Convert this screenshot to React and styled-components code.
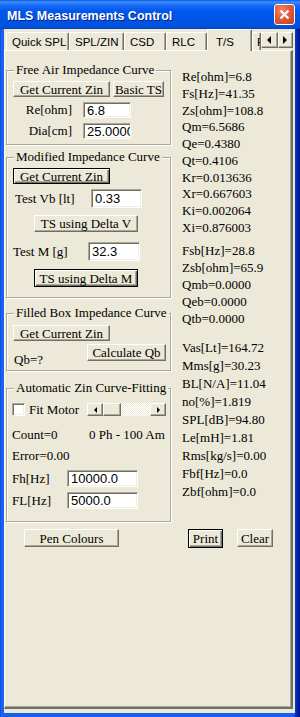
import React from "react";
import styled, { createGlobalStyle, css } from "styled-components";

const GlobalStyle = createGlobalStyle`
  html, body { margin: 0; padding: 0; background: #fff; }
  body { width: 300px; height: 717px; overflow: hidden; }
  * { box-sizing: border-box; }
`;

const Window = styled.div`
  width: 300px;
  height: 717px;
  display: flex;
  flex-direction: column;
`;

const TitleBar = styled.div`
  height: 29px;
  display: flex;
  align-items: center;
  padding: 2px 5px 0 7px;
  background: linear-gradient(
    to bottom,
    #0a5ae6 0px,
    #3d8ffc 2px,
    #1a6cf6 5px,
    #0058ee 11px,
    #0055e5 20px,
    #0052dd 26px,
    #0046c8 29px
  );
`;

const Title = styled.span`
  flex: 1;
  color: #fff;
  font: bold 12.5px "Liberation Sans", Arial, sans-serif;
  text-shadow: 1px 1px 0 #0a1e8c;
  white-space: nowrap;
`;

const CloseBtn = styled.div`
  width: 21px;
  height: 21px;
  margin-top: -2px;
  border: 1px solid #fff;
  border-radius: 3px;
  background: radial-gradient(circle at 35% 30%, #f08a6a 0%, #e2593a 45%, #c4401f 100%);
  display: flex;
  align-items: center;
  justify-content: center;
`;

const Frame = styled.div`
  flex: 1;
  display: flex;
  padding: 0 5px 4px 4px;
  background: linear-gradient(
    to right,
    #0a3ad6 0px,
    #1c64f2 1px,
    #1660ee 4px,
    #1660ee 294px,
    #0a3fd8 295px,
    #0024b0 297px,
    #001487 300px
  );
`;

const Client = styled.div`
  flex: 1;
  display: flex;
  flex-direction: column;
  background: #ece9d8;
`;

const TabStrip = styled.div`
  height: 21px;
  display: flex;
  align-items: flex-end;
  padding-left: 2px;
`;

const Tab = styled.div`
  width: ${(p) => p.$w}px;
  height: ${(p) => (p.$active ? 22 : 18)}px;
  margin-bottom: ${(p) => (p.$active ? -1 : 0)}px;
  padding-left: ${(p) => p.$pl || 5}px;
  padding-top: ${(p) => (p.$active ? 2 : 1)}px;
  display: flex;
  align-items: center;
  overflow: hidden;
  position: relative;
  z-index: ${(p) => (p.$active ? 2 : 0)};
  background: #ece9d8;
  border-top: 1px solid #fff;
  border-left: 1px solid #fff;
  border-right: 1px solid #716f64;
  box-shadow: inset -1px 0 0 #aca899;
  border-radius: 2px 2px 0 0;
  font: 11.5px "Liberation Sans", Arial, sans-serif;
  color: #000;
  white-space: nowrap;
`;

const Spin = styled.div`
  display: flex;
  align-self: flex-start;
  margin-top: 3px;
`;

const SpinBtn = styled.div`
  width: ${(p) => p.$w}px;
  height: 16px;
  display: flex;
  align-items: center;
  justify-content: center;
  background: #ece9d8;
  border: 1px solid;
  border-color: #fff #716f64 #716f64 #fff;
  box-shadow: inset -1px -1px 0 #aca899;
`;

const Panel = styled.div`
  flex: 1;
  margin: 0 2px 4px 0;
  display: flex;
  flex-direction: column;
  border-top: 1px solid #fff;
  border-left: 1px solid #fff;
  border-right: 2px solid #716f64;
  border-bottom: 2px solid #716f64;
  box-shadow: inset -1px -1px 0 #aca899;
  font: 13px "Liberation Serif", "Times New Roman", serif;
  color: #000;
`;

const Columns = styled.div`
  display: flex;
  align-items: flex-start;
`;

const LeftCol = styled.div`
  width: 165px;
  margin-left: 1px;
  display: flex;
  flex-direction: column;
`;

const RightCol = styled.div`
  margin-left: 11px;
  padding-top: 18px;
  display: flex;
  flex-direction: column;
`;

const Group = styled.div`
  margin-top: ${(p) => p.$mt}px;
  height: ${(p) => p.$h}px;
  display: flex;
  flex-direction: column;
  border: 1px solid #aca899;
  box-shadow: inset 1px 1px 0 #fff, 1px 1px 0 #fff;
`;

const Legend = styled.div`
  margin: -8px 0 0 7px;
  padding: 0 2px;
  width: fit-content;
  line-height: 14px;
  height: 14px;
  background: #ece9d8;
  white-space: nowrap;
`;

const Row = styled.div`
  display: flex;
  align-items: ${(p) => p.$align || "center"};
  height: ${(p) => p.$h}px;
  margin-top: ${(p) => p.$mt}px;
  padding-left: ${(p) => p.$pl || 0}px;
  padding-right: ${(p) => p.$pr || 0}px;
  gap: ${(p) => p.$gap || 0}px;
`;

const Label = styled.span`
  width: ${(p) => (p.$w ? `${p.$w}px` : "auto")};
  text-align: ${(p) => (p.$right ? "right" : "left")};
  margin-top: ${(p) => p.$mt || 0}px;
  line-height: 14px;
  white-space: nowrap;
`;

const Btn = styled.button`
  width: ${(p) => p.$w}px;
  height: ${(p) => p.$h || 16}px;
  margin: 0;
  margin-left: ${(p) => (p.$push ? "auto" : "0")};
  padding: 0;
  font: 13px "Liberation Serif", "Times New Roman", serif;
  line-height: 1;
  color: #000;
  background: #ece9d8;
  border: 1px solid;
  border-color: #fff #716f64 #716f64 #fff;
  box-shadow: inset -1px -1px 0 #aca899;
  white-space: nowrap;
  ${(p) =>
    p.$default &&
    css`
      border: 1px solid #000;
      box-shadow: inset 1px 1px 0 #fff, inset -1px -1px 0 #716f64,
        inset -2px -2px 0 #aca899;
    `}
`;

const Field = styled.div`
  width: ${(p) => p.$w}px;
  height: ${(p) => p.$h || 16}px;
  display: flex;
  align-items: center;
  padding-left: 3px;
  overflow: hidden;
  background: #fff;
  border: 1px solid;
  border-color: #aca899 #fff #fff #aca899;
  box-shadow: inset 1px 1px 0 #716f64, inset -1px -1px 0 #f1efe2;
  font: 13px "Liberation Sans", Arial, sans-serif;
  white-space: nowrap;
`;

const Check = styled.div`
  width: 13px;
  height: 13px;
  background: #fff;
  border: 1px solid;
  border-color: #aca899 #fff #fff #aca899;
  box-shadow: inset 1px 1px 0 #716f64, inset -1px -1px 0 #f1efe2;
`;

const Scroll = styled.div`
  width: 79px;
  height: 13px;
  margin-left: auto;
  display: flex;
`;

const ScrollBtn = styled.div`
  width: ${(p) => p.$w}px;
  height: 13px;
  display: flex;
  align-items: center;
  justify-content: center;
  background: #ece9d8;
  border: 1px solid;
  border-color: #fff #716f64 #716f64 #fff;
  box-shadow: inset -1px -1px 0 #aca899;
`;

const Track = styled.div`
  flex: 1;
  background: repeating-conic-gradient(#fff 0 25%, #ece9d8 0 50%) 0 0 / 2px 2px;
`;

const Stats = styled.div`
  margin-top: ${(p) => p.$mt || 0}px;
  display: flex;
  flex-direction: column;
`;

const Stat = styled.div`
  line-height: ${(p) => p.$lh}px;
  height: ${(p) => p.$lh}px;
  white-space: nowrap;
`;

const BottomRow = styled.div`
  display: flex;
  margin-top: 7px;
  padding-left: 19px;
`;

const Left = ({ dir }) => (
  <svg width="5" height="8" viewBox="0 0 5 8">
    <path d={dir === "l" ? "M4 0 L0 4 L4 8 Z" : "M0 0 L4 4 L0 8 Z"} fill="#000" />
  </svg>
);

const Tiny = ({ dir }) => (
  <svg width="3" height="6" viewBox="0 0 3 6">
    <path d={dir === "l" ? "M3 0 L0 3 L3 6 Z" : "M0 0 L3 3 L0 6 Z"} fill="#000" />
  </svg>
);

const ts1 = [
  "Re[ohm]=6.8",
  "Fs[Hz]=41.35",
  "Zs[ohm]=108.8",
  "Qm=6.5686",
  "Qe=0.4380",
  "Qt=0.4106",
  "Kr=0.013636",
  "Xr=0.667603",
  "Ki=0.002064",
  "Xi=0.876003",
];
const ts2 = ["Fsb[Hz]=28.8", "Zsb[ohm]=65.9", "Qmb=0.0000", "Qeb=0.0000", "Qtb=0.0000"];
const ts3 = [
  "Vas[Lt]=164.72",
  "Mms[g]=30.23",
  "BL[N/A]=11.04",
  "no[%]=1.819",
  "SPL[dB]=94.80",
  "Le[mH]=1.81",
  "Rms[kg/s]=0.00",
  "Fbf[Hz]=0.0",
  "Zbf[ohm]=0.0",
];

export default function App() {
  return (
    <Window>
      <GlobalStyle />
      <TitleBar>
        <Title>MLS Measurements Control</Title>
        <CloseBtn>
          <svg width="11" height="11" viewBox="0 0 11 11">
            <path d="M1.5 1.5 L9.5 9.5 M9.5 1.5 L1.5 9.5" stroke="#fff" strokeWidth="2.2" />
          </svg>
        </CloseBtn>
      </TitleBar>
      <Frame>
        <Client>
          <TabStrip>
            <Tab $w={63}>Quick SPL</Tab>
            <Tab $w={55}>SPL/ZIN</Tab>
            <Tab $w={42}>CSD</Tab>
            <Tab $w={41}>RLC</Tab>
            <Tab $w={45} $pl={8} $active>
              T/S
            </Tab>
            <Tab $w={9} $pl={4}>
              F
            </Tab>
            <Spin>
              <SpinBtn $w={17}>
                <Left dir="l" />
              </SpinBtn>
              <SpinBtn $w={15}>
                <Left dir="r" />
              </SpinBtn>
            </Spin>
          </TabStrip>
          <Panel>
            <Columns>
              <LeftCol>
                <Group $mt={19} $h={75}>
                  <Legend>Free Air Impedance Curve</Legend>
                  <Row $mt={4} $h={16} $pl={6} $gap={3}>
                    <Btn $w={97}>Get Current Zin</Btn>
                    <Btn $w={51}>Basic TS</Btn>
                  </Row>
                  <Row $mt={5} $h={16} $gap={11}>
                    <Label $w={65} $right>
                      Re[ohm]
                    </Label>
                    <Field $w={48}>6.8</Field>
                  </Row>
                  <Row $mt={5} $h={16} $gap={11}>
                    <Label $w={65} $right>
                      Dia[cm]
                    </Label>
                    <Field $w={48}>25.0000</Field>
                  </Row>
                </Group>

                <Group $mt={12} $h={141}>
                  <Legend>Modified Impedance Curve</Legend>
                  <Row $mt={4} $h={16} $pl={6}>
                    <Btn $w={97} $default>
                      Get Current Zin
                    </Btn>
                  </Row>
                  <Row $mt={5} $h={19} $pl={8}>
                    <Label $w={76}>Test Vb [lt]</Label>
                    <Field $w={51} $h={19}>
                      0.33
                    </Field>
                  </Row>
                  <Row $mt={7} $h={17} $pl={27}>
                    <Btn $w={104} $h={17}>
                      TS using Delta V
                    </Btn>
                  </Row>
                  <Row $mt={10} $h={19} $pl={6}>
                    <Label $w={75}>Test M [g]</Label>
                    <Field $w={52} $h={19}>
                      32.3
                    </Field>
                  </Row>
                  <Row $mt={8} $h={18} $pl={27}>
                    <Btn $w={104} $h={18} $default>
                      TS using Delta M
                    </Btn>
                  </Row>
                </Group>

                <Group $mt={15} $h={58}>
                  <Legend>Filled Box Impedance Curve</Legend>
                  <Row $mt={5} $h={16} $pl={6}>
                    <Btn $w={97}>Get Current Zin</Btn>
                  </Row>
                  <Row $mt={3} $h={17} $pl={7} $pr={4} $align="flex-start">
                    <Label $mt={9}>Qb=?</Label>
                    <Btn $w={79} $h={17} $push>
                      Calculate Qb
                    </Btn>
                  </Row>
                </Group>

                <Group $mt={17} $h={134}>
                  <Legend>Automatic Zin Curve-Fitting</Legend>
                  <Row $mt={8} $h={13} $pl={5} $pr={4} $gap={4}>
                    <Check />
                    <Label>Fit Motor</Label>
                    <Scroll>
                      <ScrollBtn $w={16}>
                        <Tiny dir="l" />
                      </ScrollBtn>
                      <ScrollBtn $w={18} />
                      <Track />
                      <ScrollBtn $w={16}>
                        <Tiny dir="r" />
                      </ScrollBtn>
                    </Scroll>
                  </Row>
                  <Row $mt={12} $h={14} $pl={5}>
                    <Label $w={77}>Count=0</Label>
                    <Label>0 Ph - 100 Am</Label>
                  </Row>
                  <Row $mt={7} $h={14} $pl={5}>
                    <Label>Error=0.00</Label>
                  </Row>
                  <Row $mt={7} $h={17} $pl={5}>
                    <Label $w={55}>Fh[Hz]</Label>
                    <Field $w={71} $h={17}>
                      10000.0
                    </Field>
                  </Row>
                  <Row $mt={5} $h={17} $pl={5}>
                    <Label $w={55}>FL[Hz]</Label>
                    <Field $w={71} $h={17}>
                      5000.0
                    </Field>
                  </Row>
                </Group>
              </LeftCol>

              <RightCol>
                <Stats>
                  {ts1.map((t) => (
                    <Stat key={t} $lh={16.75}>
                      {t}
                    </Stat>
                  ))}
                </Stats>
                <Stats $mt={5}>
                  {ts2.map((t) => (
                    <Stat key={t} $lh={17}>
                      {t}
                    </Stat>
                  ))}
                </Stats>
                <Stats $mt={12}>
                  {ts3.map((t) => (
                    <Stat key={t} $lh={18}>
                      {t}
                    </Stat>
                  ))}
                </Stats>
              </RightCol>
            </Columns>

            <BottomRow>
              <Btn $w={95} $h={18}>
                Pen Colours
              </Btn>
              <Btn $w={35} $h={19} $default style={{ marginLeft: 69 }}>
                Print
              </Btn>
              <Btn $w={36} $h={18} style={{ marginLeft: 14 }}>
                Clear
              </Btn>
            </BottomRow>
          </Panel>
        </Client>
      </Frame>
    </Window>
  );
}
